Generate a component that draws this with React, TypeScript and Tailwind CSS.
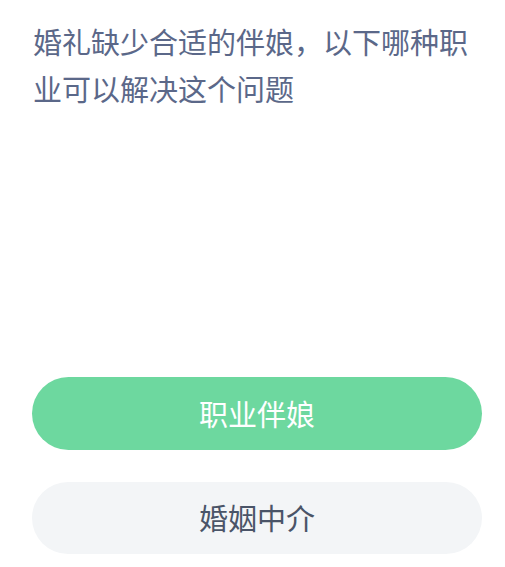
export default function App() {
  return (
    <div
      className="w-full h-[567px] bg-white flex flex-col overflow-hidden"
      style={{ fontFamily: '"Noto Sans CJK SC", "Noto Sans", sans-serif' }}
    >
      {/* Question */}
      <p className="ml-[33px] mt-[18px] w-[432px] text-[29px] leading-[47px] text-[#5b6889]">
        <span className="block whitespace-nowrap text-justify [text-align-last:justify]">
          婚礼缺少合适的伴娘，以下哪种职
        </span>
        <span className="block whitespace-nowrap">业可以解决这个问题</span>
      </p>

      {/* Options */}
      <div className="mt-[265px] ml-[32px] w-[450px] flex flex-col gap-[32px]">
        <button className="h-[73px] w-full rounded-full bg-[#6dd89f] text-white text-[29px] flex items-center justify-center">
          职业伴娘
        </button>
        <button className="h-[72px] w-full rounded-full bg-[#f3f5f7] text-[#4a5468] text-[29px] flex items-center justify-center">
          婚姻中介
        </button>
      </div>
    </div>
  )
}
